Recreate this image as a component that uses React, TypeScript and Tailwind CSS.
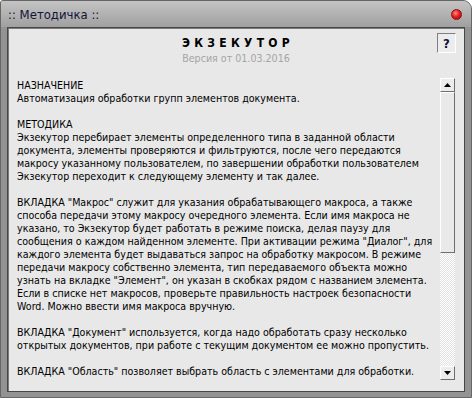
import React from 'react'

const lines: string[] = [
  'НАЗНАЧЕНИЕ',
  'Автоматизация обработки групп элементов документа.',
  '',
  'МЕТОДИКА',
  'Экзекутор перебирает элементы определенного типа в заданной области',
  'документа, элементы проверяются и фильтруются, после чего передаются',
  'макросу указанному пользователем, по завершении обработки пользователем',
  'Экзекутор переходит к следующему элементу и так далее.',
  '',
  'ВКЛАДКА "Макрос" служит для указания обрабатывающего макроса, а также',
  'способа передачи этому макросу очередного элемента. Если имя макроса не',
  'указано, то Экзекутор будет работать в режиме поиска, делая паузу для',
  'сообщения о каждом найденном элементе. При активации режима "Диалог", для',
  'каждого элемента будет выдаваться запрос на обработку макросом. В режиме',
  'передачи макросу собственно элемента, тип передаваемого объекта можно',
  'узнать на вкладке "Элемент", он указан в скобках рядом с названием элемента.',
  'Если в списке нет макросов, проверьте правильность настроек безопасности',
  'Word. Можно ввести имя макроса вручную.',
  '',
  'ВКЛАДКА "Документ" используется, когда надо обработать сразу несколько',
  'открытых документов, при работе с текущим документом ее можно пропустить.',
  '',
  'ВКЛАДКА "Область" позволяет выбрать область с элементами для обработки.',
]

const font = "font-['DejaVu_Sans_Condensed','DejaVu_Sans',sans-serif] font-stretch-condensed"

function Arrow({ up }: { up?: boolean }) {
  return (
    <svg width="7" height="4" viewBox="0 0 7 4">
      <path d={up ? 'M3.5 0 L7 4 L0 4 Z' : 'M0 0 L7 0 L3.5 4 Z'} fill="#000" />
    </svg>
  )
}

function ScrollButton({ up }: { up?: boolean }) {
  return (
    <div className="h-[14px] w-[15px] flex items-center justify-center bg-[#ececec] border-t border-l border-t-white border-l-white border-r border-b border-r-[#6e6e6e] border-b-[#6e6e6e]">
      <Arrow up={up} />
    </div>
  )
}

export default function App() {
  return (
    <div className="w-[472px] h-[398px] flex flex-col bg-[#939393] rounded-tl-[3px] rounded-tr-[9px] border border-[#666666] overflow-hidden">
      {/* Title bar */}
      <div className="h-[26px] shrink-0 flex items-center justify-between pl-[7px] pr-[9px] bg-gradient-to-b from-[#c4c4c4] to-[#a0a0a0]">
        <span className={`${font} text-[13px] text-[#14143a] leading-none pt-[1px]`}>:: Методичка ::</span>
        <span className="w-[11px] h-[11px] rounded-full border border-[#8a1010] bg-[radial-gradient(circle_at_40%_35%,#ff8a8a_0%,#e82020_45%,#a80000_100%)]" />
      </div>

      {/* Content panel */}
      <div className="flex-1 mx-[6px] mb-[5px] flex flex-col bg-[#e8e8e8] border border-[#474747] shadow-[inset_1px_1px_0_#7a7a7a]">
        {/* Header */}
        <div className="relative h-[50px] shrink-0 flex flex-col items-center pt-[8px]">
          <div className={`${font} font-bold text-[12px] leading-[14px] tracking-[4.3px] text-black pl-[4px]`}>ЭКЗЕКУТОР</div>
          <div className={`${font} text-[10.6px] leading-[13px] text-[#a5a5a5] mt-[2px]`}>Версия от 01.03.2016</div>
          <div className="absolute right-[8px] top-[5px] w-[19px] h-[20px] flex items-center justify-center border border-t-[#808080] border-l-[#808080] border-r-white border-b-white bg-[#ececec]">
            <span className={`${font} font-bold text-[13px] text-[#10103a] leading-none`}>?</span>
          </div>
        </div>

        {/* Body */}
        <div className="flex flex-1 pb-[11px] pr-[9px]">
          <div className={`${font} flex-1 pl-[9px] pt-[1px] text-[10.6px] leading-[13px] text-black whitespace-nowrap overflow-hidden`}>
            {lines.map((line, i) => (
              <div key={i} className="h-[13px]">
                {line}
              </div>
            ))}
          </div>
          <div className="w-[15px] flex flex-col">
            <ScrollButton up />
            <div className="h-[161px] bg-[#e9e9e9] border-t border-l border-t-white border-l-white border-r border-b border-r-[#6e6e6e] border-b-[#6e6e6e]" />
            <div className="flex-1 bg-[repeating-conic-gradient(#ffffff_0_25%,#e2e2e2_0_50%)] bg-[length:2px_2px]" />
            <ScrollButton />
          </div>
        </div>
      </div>
    </div>
  )
}
